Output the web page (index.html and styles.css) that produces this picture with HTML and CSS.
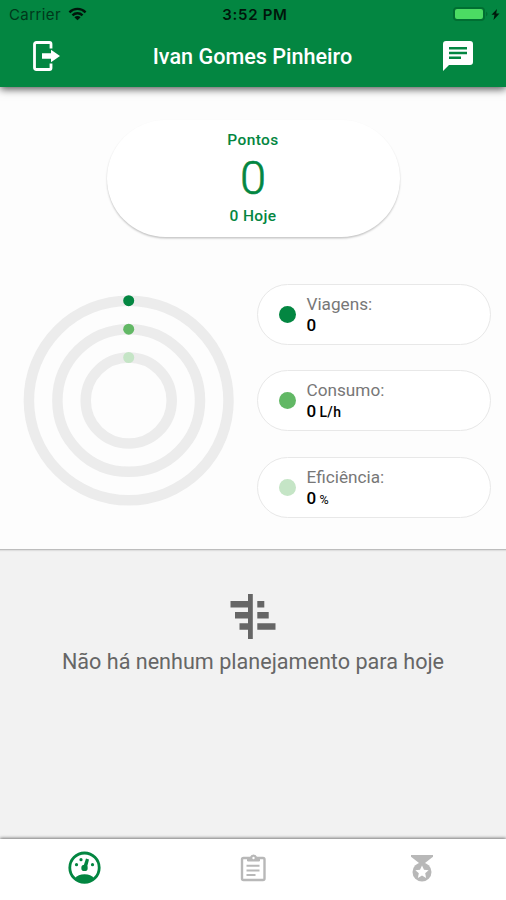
FILE: index.html
```html
<!DOCTYPE html>
<html lang="pt-BR">

<head>
    <meta charset="UTF-8">
    <meta name="viewport" content="width=device-width, initial-scale=1.0">
    <title>Pontos</title>
    <link rel="stylesheet" href="styles.css">
</head>

<body>
    <div id="app">
        <header class="header">
            <div class="status-bar">
                <div class="carrier">
                    <span>Carrier</span>
                    <svg class="wifi" width="19" height="14" viewBox="0 0 20 14" fill="none" stroke="#00160b" stroke-width="2.5">
                        <path d="M1.5 5.2a12 12 0 0 1 17 0M4.7 8.4a7.5 7.5 0 0 1 10.6 0" />
                        <path d="M10 13.6l-3.3-3.2a4.7 4.7 0 0 1 6.6 0z" fill="#00160b" stroke="none" />
                    </svg>
                </div>
                <span class="time">3:52 PM</span>
                <svg class="battery" width="48" height="16" viewBox="0 0 48 16">
                    <rect x="1" y="2" width="30" height="12" rx="3" fill="#4bdc63" stroke="#006f32" stroke-width="2" />
                    <path d="M33 5.5q3 2.5 0 5z" fill="#006f32" />
                    <path d="M44 3l-5.5 5.8h3L40.5 14l6-6.500h-3.300z" fill="#001a0c" />
                </svg>
            </div>
            <div class="title-bar">
                <svg width="36" height="36" viewBox="0 0 36 36">
                    <path d="M22 10.500V6q0-1.500-1.500-1.500H7.500Q5.500 4.500 5.500 6.500v23q0 2 2 2h13q1.500 0 1.500-1.500v-4.500" fill="none" stroke="#fff" stroke-width="2.800" />
                    <path d="M13 15.200h9v-3.500l9 6.300-9 6.300v-3.500h-9z" fill="#fff" />
                </svg>
                <h1 class="title">Ivan Gomes Pinheiro</h1>
                <svg width="36" height="36" viewBox="0 0 24 24">
                    <path d="M4 2h16a2 2 0 0 1 2 2v12a2 2 0 0 1-2 2H6l-4 4V4a2 2 0 0 1 2-2m2 4v1.700h12V6H6m0 3.200v1.700h12V9.200H6m0 3.100V14h8v-1.700H6z" fill="#fff" />
                </svg>
            </div>
        </header>

        <main class="summary">
            <div class="points">
                <p class="points-text">Pontos</p>
                <p class="points-total">0</p>
                <p class="points-text">0 Hoje</p>
            </div>
            <div class="stats">
                <svg class="rings" width="212" height="212" viewBox="0 0 212 212">
                    <g fill="none" stroke="#ececec" stroke-width="10.500">
                        <circle cx="105.700" cy="105.500" r="99.800" />
                        <circle cx="105.700" cy="105.500" r="71.300" />
                        <circle cx="105.700" cy="105.500" r="43" />
                    </g>
                    <circle cx="105.700" cy="5.700" r="5.500" fill="#038641" />
                    <circle cx="105.700" cy="34.200" r="5.500" fill="#62b865" />
                    <circle cx="105.700" cy="62.500" r="5.500" fill="#c5e5c6" />
                </svg>
                <div class="cards">
                    <div class="card">
                        <span class="dot dark"></span>
                        <div>
                            <p class="label">Viagens:</p>
                            <p class="value">0</p>
                        </div>
                    </div>
                    <div class="card">
                        <span class="dot medium"></span>
                        <div>
                            <p class="label">Consumo:</p>
                            <p class="value">0 <small>L/h</small></p>
                        </div>
                    </div>
                    <div class="card">
                        <span class="dot light"></span>
                        <div>
                            <p class="label">Eficiência:</p>
                            <p class="value">0 <small class="percent">%</small></p>
                        </div>
                    </div>
                </div>
            </div>
        </main>

        <section class="planning">
            <svg width="46" height="46" viewBox="0 0 46 46" fill="#666">
                <path d="M18 0h4.800v45H18zM.5 7H18v6.500H.5zM5 18h13v6.500H5zM9.500 29.200H18v6.500H9.500zM27.300 7h7v6.500h-7zM27.300 18h11.400v6.500H27.300zM27.300 29.200h18.200v6.500H27.300z" />
            </svg>
            <p class="planning-text">Não há nenhum planejamento para hoje</p>
        </section>

        <nav class="tabs">
            <a href="#" class="tab active">
                <svg width="34" height="34" viewBox="0 0 34 34" fill="currentColor">
                    <circle cx="17.500" cy="16.700" r="14.700" fill="none" stroke="currentColor" stroke-width="2.800" />
                    <path d="M8 27.200Q11 23.200 17.500 23.200t9.500 4Q23 31.700 17.500 31.700T8 27.200z" />
                    <circle cx="17.500" cy="16.900" r="3.200" />
                    <path d="M16.200 16l2.800-8.500 3 1L19.700 17.500z" />
                    <circle cx="14" cy="8.700" r="1.600" />
                    <circle cx="9.500" cy="13.700" r="1.600" />
                    <circle cx="25.500" cy="13.700" r="1.600" />
                </svg>
            </a>
            <a href="#" class="tab">
                <svg width="32" height="32" viewBox="0 0 32 32" fill="none" stroke="currentColor" stroke-width="2.400">
                    <rect x="5" y="6" width="22.500" height="22" rx="1.500" />
                    <path d="M9.500 13.700h13M9.500 18.500h13M9.500 23h9" stroke-width="2" />
                    <path d="M10.500 6h3a3 3 0 0 1 6 0h3v3h-12z" fill="currentColor" stroke-width="1" />
                    <circle cx="16.500" cy="6" r="1.200" fill="#fff" stroke="none" />
                </svg>
            </a>
            <a href="#" class="tab">
                <svg width="32" height="32" viewBox="0 0 32 32" fill="currentColor">
                    <path d="M5 3h22v1.800L19 11h-6L5 4.800z" />
                    <circle cx="16" cy="20" r="9.500" />
                    <path d="M16 13.500l2 4.200 4.600.5-3.400 3.100.9 4.600-4.100-2.300-4.100 2.300.9-4.600-3.400-3.100 4.600-.5z" fill="#fff" />
                </svg>
            </a>
        </nav>
    </div>
</body>

</html>
```

FILE: styles.css
```css
html * {
    padding: 0;
    margin: 0;
    box-sizing: border-box;
}

body {
    font-family: Roboto, "Liberation Sans", sans-serif;
    background: #fff;
}

svg {
    display: block;
    flex-shrink: 0;
}

#app {
    display: flex;
    flex-direction: column;
    width: 506px;
    height: 900px;
    overflow: hidden;
}

.header {
    position: relative;
    height: 87px;
    background: #038641;
    box-shadow: 0 2px 8px rgba(0, 0, 0, .7);
}

.status-bar {
    display: grid;
    grid-template-columns: 1fr auto 1fr;
    align-items: center;
    height: 28px;
    padding: 0 5px 0 9px;
    color: #00160b;
    font-family: Inter, sans-serif;
    font-size: 15px;
}

.carrier {
    display: flex;
    align-items: center;
    gap: 7px;
    color: #00381b;
    letter-spacing: .4px;
}

.time {
    font-weight: 600;
    letter-spacing: .7px;
}

.battery {
    justify-self: end;
}

.title-bar {
    display: flex;
    align-items: center;
    justify-content: space-between;
    height: 56px;
    padding: 0 30px 0 29px;
}

.title {
    color: #fff;
    font-size: 21.6px;
    font-weight: 500;
}

.summary {
    height: 462px;
    padding-top: 33px;
    background: #fdfdfd;
}

.points {
    width: 293px;
    height: 117px;
    margin: 0 auto;
    padding-top: 10px;
    border-radius: 59px;
    background: #fff;
    box-shadow: 0 1.5px 2px rgba(0, 0, 0, .22);
    color: #038641;
    text-align: center;
}

.points-text {
    font-size: 15.5px;
    font-weight: 500;
    letter-spacing: .4px;
    line-height: 20px;
}

.points-total {
    font-size: 47px;
    font-weight: 300;
    line-height: 56px;
    -webkit-text-stroke: .6px #038641;
}

.stats {
    display: flex;
    align-items: center;
    justify-content: space-between;
    height: 233px;
    margin-top: 47px;
    padding: 0 15px 0 23px;
}

.cards {
    display: flex;
    flex-direction: column;
    gap: 25.5px;
}

.card {
    display: flex;
    align-items: center;
    gap: 10.5px;
    width: 234px;
    height: 61px;
    padding-left: 21px;
    border: 1px solid #e8e8e8;
    border-radius: 31px;
    background: #fff;
}

.card div {
    padding-top: 2px;
}

.dot {
    width: 17px;
    height: 17px;
    border-radius: 50%;
}

.dark {
    background: #038641;
}

.medium {
    background: #62b865;
}

.light {
    background: #c5e5c6;
}

.label {
    color: #777;
    font-size: 17.2px;
    line-height: 21px;
}

.value {
    color: #000;
    font-size: 17px;
    font-weight: 500;
    line-height: 21px;
}

.value small {
    margin-left: -1px;
    font-size: 14px;
    letter-spacing: .4px;
}

.value .percent {
    font-size: 12.5px;
    font-weight: 400;
}

.planning {
    display: flex;
    flex: 1;
    flex-direction: column;
    align-items: center;
    padding-top: 45px;
    background: #f2f2f2;
    box-shadow: inset 0 3px 2px -2px rgba(0, 0, 0, .3);
}

.planning-text {
    margin-top: 8px;
    color: #666;
    font-size: 21.6px;
    line-height: 28px;
}

.tabs {
    display: grid;
    grid-template-columns: repeat(3, 1fr);
    height: 61px;
    background: #fff;
    box-shadow: 0 -1px 3px rgba(0, 0, 0, .5);
}

.tab {
    display: flex;
    align-items: center;
    justify-content: center;
    height: 57px;
    color: #b8b8b8;
}

.active {
    color: #038641;
}
```
